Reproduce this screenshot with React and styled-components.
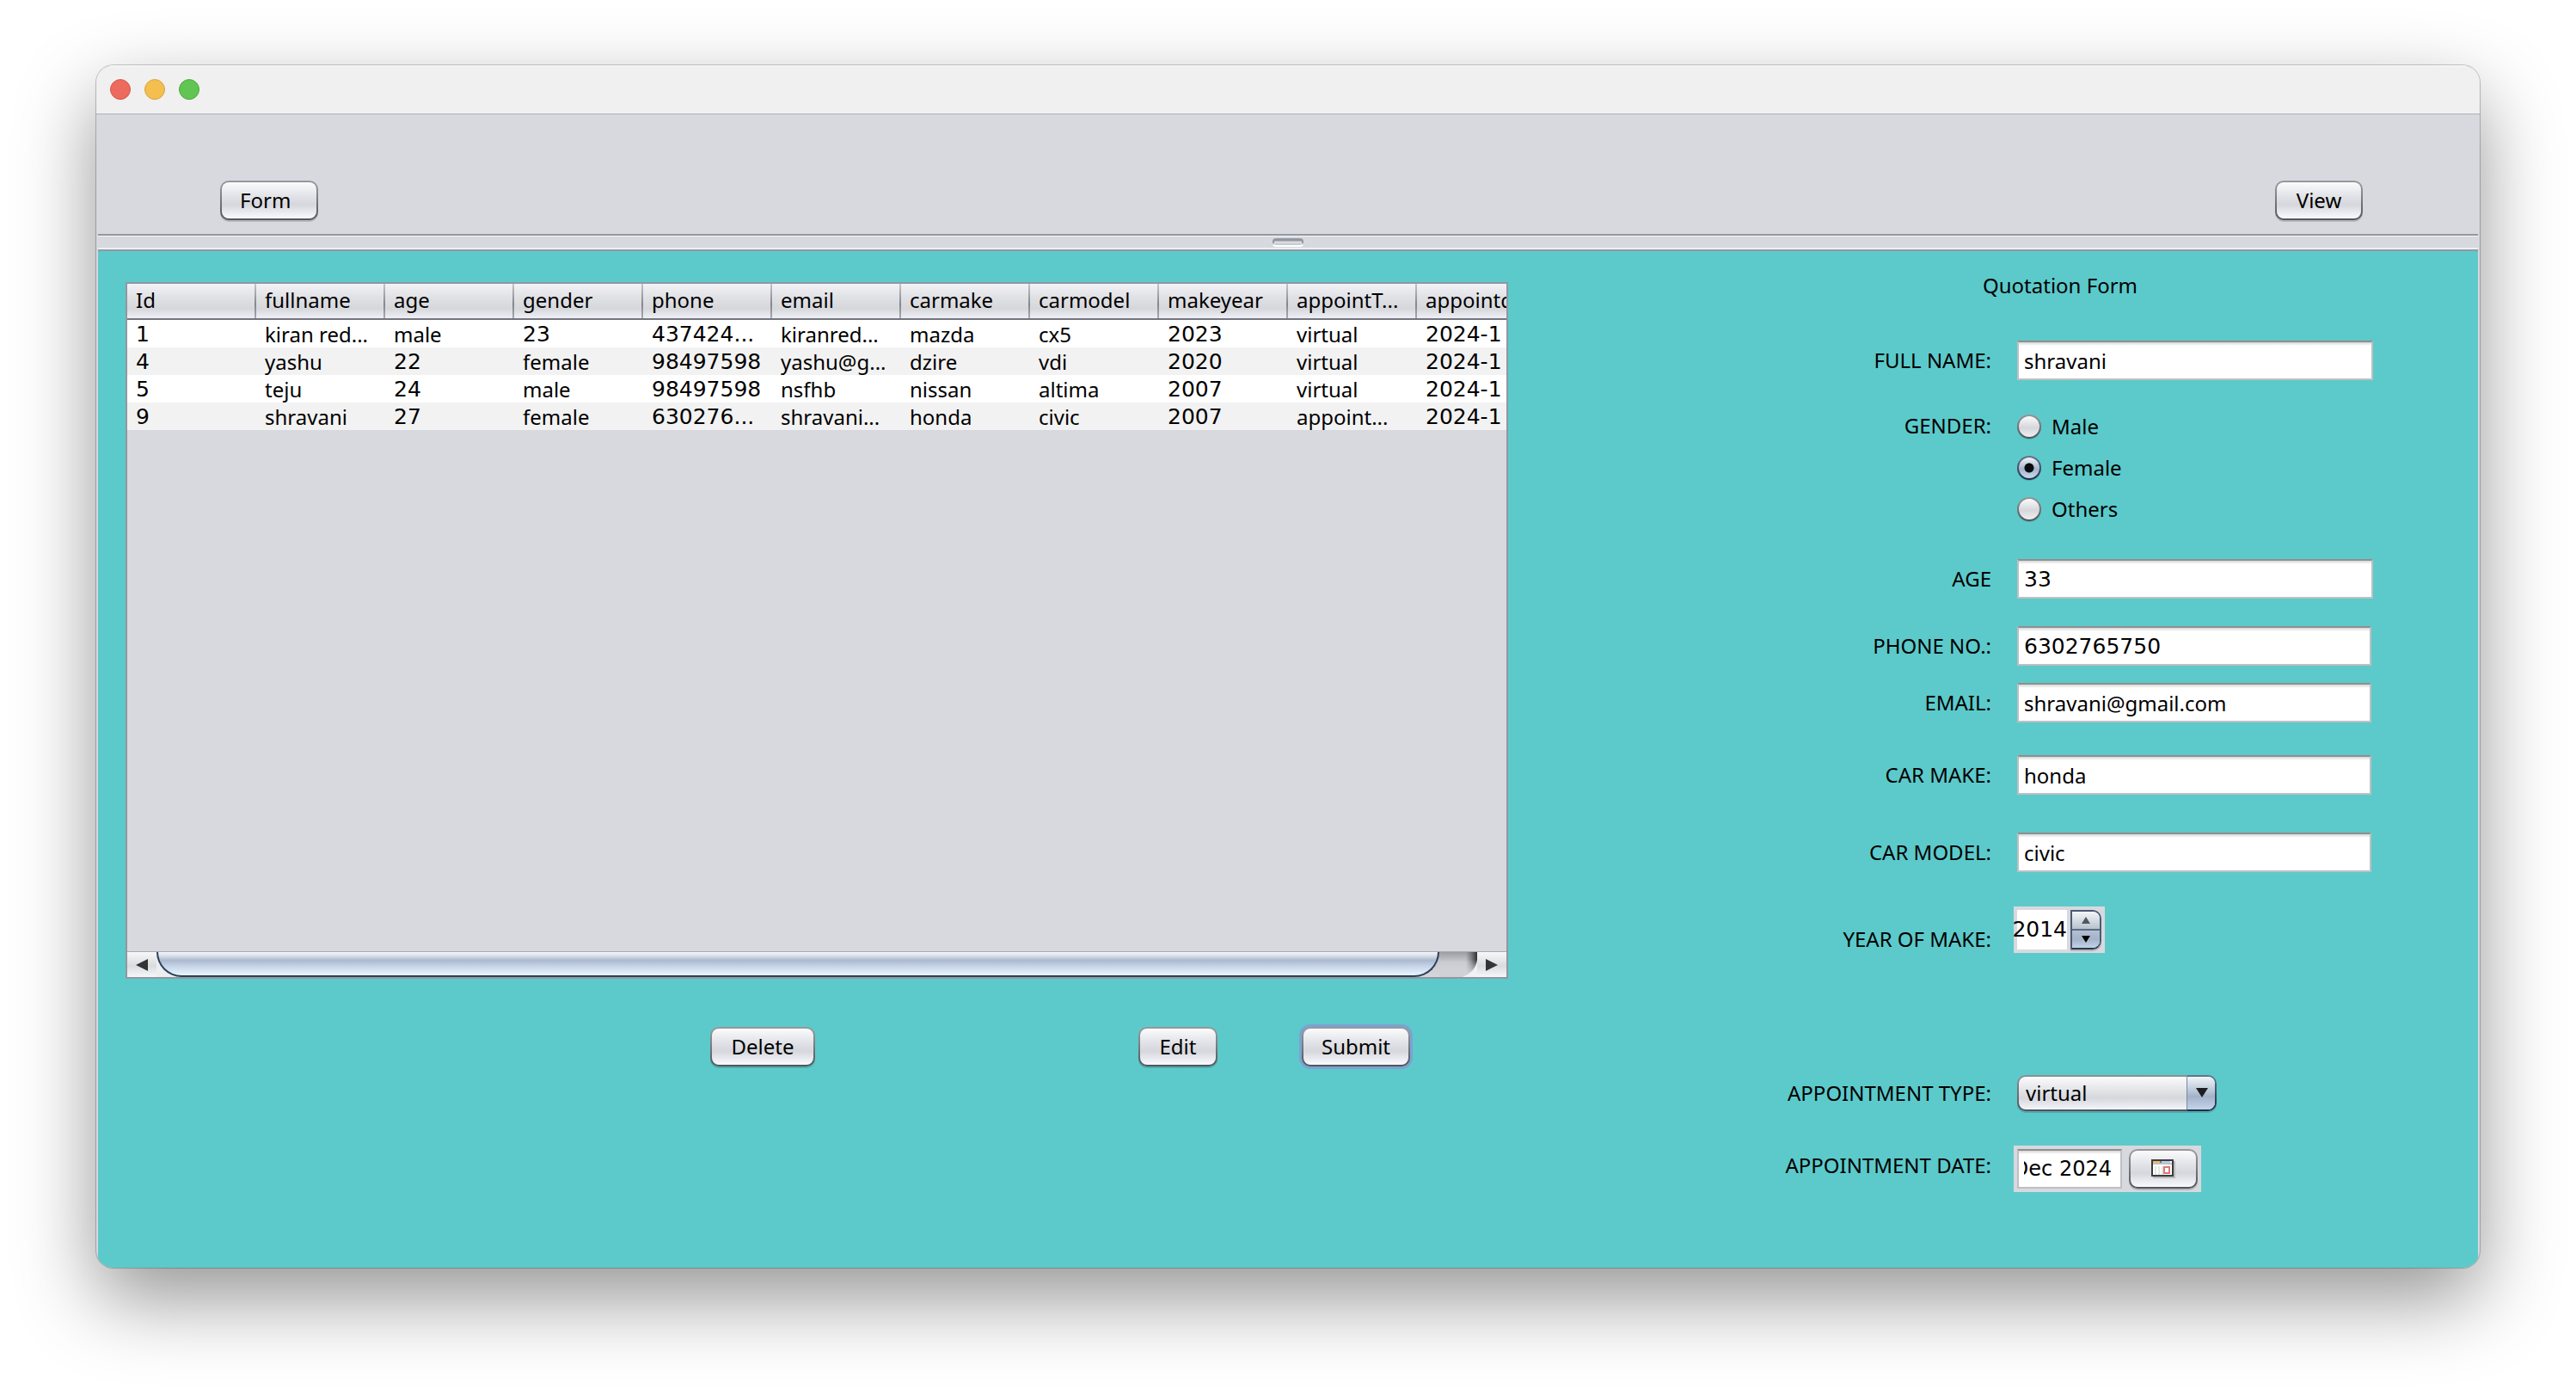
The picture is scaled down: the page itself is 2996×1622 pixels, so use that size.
import React from "react";
import styled, { createGlobalStyle, css } from "styled-components";

const color = {
  control: "#d8d9de",
  teal: "#5ccacb",
  line: "#9297a1",
  title: "#f0f0f0",
};

const textFont = '"Noto Sans", "Open Sans", sans-serif';
const digitFont = '"DejaVu Sans", "Noto Sans", sans-serif';

const GlobalStyle = createGlobalStyle`
  *, *::before, *::after { box-sizing: border-box; }
  body {
    margin: 0;
    background: #ffffff;
    color: #000000;
    font: 24px/32px ${textFont};
  }
  button, input, select { font: inherit; color: inherit; margin: 0; outline: none; }
`;

const digits = css`
  font-family: ${digitFont};
  font-size: 25px;
`;

/* Window frame */

const Desktop = styled.div`
  padding: 76px 112px 148px;
  overflow: hidden;
`;

const Window = styled.div`
  display: flex;
  flex-direction: column;
  overflow: hidden;
  border-radius: 20px;
  background: ${color.control};
  box-shadow: 0 0 0 1px rgba(0, 0, 0, 0.22), 0 36px 92px rgba(0, 0, 0, 0.42);
`;

const TitleBar = styled.header`
  display: flex;
  align-items: flex-start;
  gap: 16px;
  height: 57px;
  padding: 16px;
  background: ${color.title};
  border-bottom: 1px solid #b0b1b8;
  box-shadow: inset 0 1px 0 #ffffff;
`;

const Light = styled.button`
  width: 24px;
  height: 24px;
  padding: 0;
  border: 1px solid ${(p) => p.$edge};
  border-radius: 50%;
  background: ${(p) => p.$fill};
`;

const Toolbar = styled.nav`
  display: flex;
  justify-content: space-between;
  padding: 77px 136px 16px 144px;
`;

const Button = styled.button`
  height: 46px;
  min-width: ${(p) => p.$width}px;
  padding: 0 10px;
  border: 2px solid transparent;
  border-radius: 10px;
  background:
    linear-gradient(#fbfbfc 0%, #e2e3e8 38%, #d6d7dc 62%, #f9faff 100%) padding-box,
    linear-gradient(#96999e 0%, #86898e 30%, #515459 100%) border-box;
  box-shadow: ${(p) =>
    p.$focused ? "0 0 0 3px #7ba3d0" : "0 2px 0 rgba(40, 50, 60, 0.2)"};
  line-height: 40px;
  ${(p) => p.$leading && css`
    padding-left: 21px;
    text-align: left;
  `}
`;

const Divider = styled.div`
  display: flex;
  justify-content: center;
  align-items: center;
  height: 20px;
  margin: 0 2px;
  border-top: 2px solid ${color.line};
  border-bottom: 2px solid ${color.line};
  box-shadow: inset 0 1px 0 #f4f5f8, inset 0 -2px 0 #eeeff2;
`;

const Grip = styled.div`
  width: 36px;
  height: 10px;
  border: 2px solid transparent;
  border-radius: 4px;
  background:
    linear-gradient(${color.line} 0 1px, #dfe1e6 2px, #c4c6cc) padding-box,
    linear-gradient(${color.line} 0 50%, #ffffff 80%) border-box;
`;

const Workspace = styled.main`
  display: grid;
  grid-template-columns: minmax(0, 1608fr) minmax(0, 1006fr);
  margin: 0 2px;
  padding: 0 122px 0 32px;
  background: ${color.teal};
`;

/* Records */

const Records = styled.section`
  display: flex;
  flex-direction: column;
  gap: 56px;
  padding-top: 36px;
`;

const ScrollPane = styled.div`
  display: flex;
  flex-direction: column;
  height: 810px;
  border: 2px solid ${color.line};
  background: ${color.control};
`;

const Viewport = styled.div`
  flex: 1;
  overflow: hidden;
`;

const Table = styled.table`
  width: 1650px;
  table-layout: fixed;
  border-collapse: separate;
  border-spacing: 0;
`;

const HeadCell = styled.th`
  width: 150px;
  height: 42px;
  padding: 0 0 2px 10px;
  overflow: hidden;
  border-bottom: 2px solid #74747f;
  background:
    linear-gradient(#c4c5ca, #85868c 60%, #a9aab0) right / 2px 100% no-repeat,
    linear-gradient(#f3f3f7 0%, #e0e1e5 40%, #d6d7db 72%, #eef0f5 100%);
  font-weight: 400;
  text-align: left;
  white-space: nowrap;
`;

const Row = styled.tr`
  background: #ffffff;
  &:nth-child(even) { background: #f2f2f2; }
`;

const Cell = styled.td`
  height: 32px;
  padding: 2px 0 0 10px;
  overflow: hidden;
  line-height: 30px;
  white-space: nowrap;
  ${(p) => p.$digits && digits}
`;

const ScrollBar = styled.div`
  display: flex;
  height: 30px;
  border-top: 1px solid #a8abb2;
  background: linear-gradient(to right, #eceef0 0 60px, transparent 60px),
    linear-gradient(#9c9da3, #c9cad0 40%, #d6d7dc);
`;

const ScrollButton = styled.button`
  display: flex;
  align-items: center;
  justify-content: center;
  width: 34px;
  padding: 0;
  border: 0;
  background: linear-gradient(#f7f8f9, #d9dcde 55%, #f5f8fb);
`;

const Thumb = styled.div`
  flex: 1;
  border: 2px solid #2d405a;
  border-top: 0;
  border-radius: 0 0 30px 30px;
  background: linear-gradient(#f4f6f9 0%, #dde3ea 14%, #aab9cf 36%, #c3d1e6 58%, #e9f6fc 100%);
`;

const TrackEnd = styled.svg`
  display: block;
  width: 44px;
  height: 29px;
`;

const Actions = styled.div`
  display: flex;
  padding-right: 114px;
`;

const ActionSlot = styled.div`
  margin-left: ${(p) => p.$before};
`;

/* Form */

const Form = styled.form`
  display: flex;
  flex-direction: column;
  padding: 24px 0 88px;
`;

const FormTitle = styled.h1`
  align-self: flex-end;
  width: 728px;
  margin: 0 0 16px;
  font-size: 24px;
  font-weight: 400;
  text-align: center;
`;

const FormRow = styled.div`
  display: grid;
  grid-template-columns: minmax(0, 1fr) 418px;
  column-gap: 26px;
  align-items: ${(p) => p.$align || "center"};
  margin-top: ${(p) => p.$before}px;
`;

const Label = styled.label`
  line-height: ${(p) => (p.$tall ? 46 : 32)}px;
  text-align: right;
  white-space: nowrap;
`;

const FieldCell = styled.div`
  display: flex;
  flex-direction: column;
  align-items: flex-start;
  padding-left: 4px;
`;

const TextField = styled.input`
  width: ${(p) => p.$width}px;
  height: 46px;
  padding: 0 6px;
  border: 2px solid #bfc0c1;
  border-top-color: #8e8f90;
  border-radius: 0;
  background: linear-gradient(#d6d6d6, #ffffff 4px);
  ${(p) => p.$digits && digits}
  ${(p) => p.$tail && css`
    padding-right: 10px;
    direction: rtl;
    font-size: 24px;
  `}
`;

const RadioLabel = styled.label`
  display: flex;
  align-items: center;
  gap: 12px;
  height: 48px;
`;

const Radio = styled.input`
  appearance: none;
  width: 28px;
  height: 28px;
  border: 2px solid transparent;
  border-radius: 50%;
  background:
    linear-gradient(#fbfbfc, #d6d7dc 55%, #eeeff3) padding-box,
    linear-gradient(#97989c, #505156) border-box;
  box-shadow: 0 1px 0 rgba(40, 50, 60, 0.2);
  &:checked {
    background:
      radial-gradient(circle, #0b0c0e 0 5px, transparent 6px) padding-box,
      linear-gradient(#f1f4f8, #a5b4cb 55%, #c9d9ee) padding-box,
      linear-gradient(#66778f, #1e2c42) border-box;
  }
`;

const Spinner = styled.div`
  display: flex;
  align-items: stretch;
  width: 106px;
  height: 54px;
  padding: 4px 4px 4px 0;
  background: ${color.control};
`;

const SpinnerInput = styled.input`
  ${digits}
  width: 62px;
  padding: 0;
  border: 0;
  background: linear-gradient(to right, ${color.control} 4px, #ffffff 4px);
  direction: rtl;
`;

const SpinnerButtons = styled.div`
  display: flex;
  flex-direction: column;
  width: 36px;
  margin-left: 4px;
  overflow: hidden;
  border: 2px solid #4b5b74;
  border-bottom-color: #29374d;
  border-radius: 0 10px 10px 0;
  box-shadow: 0 2px 0 #b5b7bd;
`;

const SpinnerButton = styled.button`
  display: flex;
  flex: 1;
  align-items: center;
  justify-content: center;
  padding: 0;
  border: 0;
  background: ${(p) =>
    p.$down
      ? "linear-gradient(#b3c0d3, #a5b3c9 50%, #c3d2e8)"
      : "linear-gradient(#f4f6f8, #b6c2ce)"};
  & + & { border-top: 2px solid #5c6c84; }
`;

const SelectBox = styled.div`
  position: relative;
  width: 232px;
  height: 42px;
`;

const Select = styled.select`
  appearance: none;
  width: 100%;
  height: 42px;
  padding: 0 40px 0 8px;
  border: 2px solid transparent;
  border-radius: 10px;
  background:
    linear-gradient(#7589a5, #7589a5) right 32px top / 1px 100% no-repeat padding-box,
    linear-gradient(#f1f5f8, #b3c2d5 48%, #a3b2c8 60%, #c5d4ea) right / 32px 100% no-repeat padding-box,
    linear-gradient(#fbfbfc 0%, #e4e5e9 40%, #d6d7dc 65%, #f3f5fa 100%) padding-box,
    linear-gradient(#63748f, #1f2d46) right / 34px 100% no-repeat border-box,
    linear-gradient(#8c9096, #505359) border-box;
  box-shadow: 0 2px 0 rgba(40, 80, 90, 0.25);
  line-height: 36px;
`;

const SelectArrow = styled.svg`
  position: absolute;
  top: 15px;
  right: 10px;
  pointer-events: none;
`;

const DatePanel = styled.div`
  display: flex;
  gap: 8px;
  width: 218px;
  height: 54px;
  padding: 4px;
  background: ${color.control};
`;

const DateButton = styled(Button)`
  display: flex;
  align-items: center;
  justify-content: center;
`;

const columns = [
  "Id", "fullname", "age", "gender", "phone", "email",
  "carmake", "carmodel", "makeyear", "appointT...", "appointd",
];

const records = [
  ["1", "kiran red...", "male", "23", "437424...", "kiranred...", "mazda", "cx5", "2023", "virtual", "2024-1"],
  ["4", "yashu", "22", "female", "98497598", "yashu@g...", "dzire", "vdi", "2020", "virtual", "2024-1"],
  ["5", "teju", "24", "male", "98497598", "nsfhb", "nissan", "altima", "2007", "virtual", "2024-1"],
  ["9", "shravani", "27", "female", "630276...", "shravani...", "honda", "civic", "2007", "appoint...", "2024-1"],
];

const isDigits = (text) => /^[\d.-]+$/.test(text);

const Arrow = ({ width, height, points, fill = "#333436" }) => (
  <svg width={width} height={height} viewBox={`0 0 ${width} ${height}`} aria-hidden="true">
    <polygon points={points} fill={fill} />
  </svg>
);

const CalendarIcon = () => (
  <svg width="28" height="22" viewBox="0 0 28 22" aria-hidden="true">
    <rect x="2" y="2" width="26" height="20" fill="#b9babd" />
    <rect x="0" y="0" width="26" height="20" fill="#3c3c3e" />
    <rect x="2" y="2" width="22" height="16" fill="#ffffff" />
    <rect x="2" y="2" width="8" height="2" fill="#f2b857" />
    <rect x="10" y="2" width="2" height="2" fill="#77797d" />
    <rect x="12" y="2" width="10" height="2" fill="#b4cbf3" />
    <rect x="2" y="4" width="22" height="2" fill="#bfc0c2" />
    <path d="M5 8v10M9 8v10M13 8v10" stroke="#e3e8e3" strokeWidth="2" />
    <rect x="15" y="9" width="6" height="7" fill="#ffffff" stroke="#dc7777" strokeWidth="2" />
  </svg>
);

function TextRow({ id, label, value, before, width = 412 }) {
  return (
    <FormRow $before={before}>
      <Label htmlFor={id}>{label}</Label>
      <FieldCell>
        <TextField id={id} defaultValue={value} $width={width} $digits={isDigits(value)} />
      </FieldCell>
    </FormRow>
  );
}

function RecordsPanel() {
  return (
    <Records>
      <ScrollPane>
        <Viewport>
          <Table>
            <thead>
              <tr>
                {columns.map((name) => (
                  <HeadCell key={name} scope="col">{name}</HeadCell>
                ))}
              </tr>
            </thead>
            <tbody>
              {records.map((record) => (
                <Row key={record[0]}>
                  {record.map((text, i) => (
                    <Cell key={columns[i]} $digits={isDigits(text)}>{text}</Cell>
                  ))}
                </Row>
              ))}
            </tbody>
          </Table>
        </Viewport>
        <ScrollBar>
          <ScrollButton type="button" aria-label="Scroll left">
            <Arrow width={14} height={14} points="0,7 14,0 14,14" />
          </ScrollButton>
          <Thumb />
          <TrackEnd viewBox="0 0 46 29" preserveAspectRatio="none" aria-hidden="true">
            <defs>
              <linearGradient id="trackShade" x1="0" x2="1" y1="0" y2="0">
                <stop offset="0.7" stopColor="#55565a" stopOpacity="0" />
                <stop offset="1" stopColor="#2c2d30" />
              </linearGradient>
              <linearGradient id="trackFade" x1="0" x2="0" y1="0" y2="1">
                <stop offset="0.3" stopColor="#d0d1d6" stopOpacity="0" />
                <stop offset="0.9" stopColor="#d0d1d6" />
              </linearGradient>
            </defs>
            <rect width="46" height="29" fill="url(#trackShade)" />
            <rect width="46" height="29" fill="url(#trackFade)" />
            <path d="M46 9C45 18 39 25 28 29H46Z" fill="#eff1f3" />
          </TrackEnd>
          <ScrollButton type="button" aria-label="Scroll right">
            <Arrow width={14} height={14} points="0,0 14,7 0,14" />
          </ScrollButton>
        </ScrollBar>
      </ScrollPane>
      <Actions>
        <ActionSlot $before="auto"><Button type="button" $width={122}>Delete</Button></ActionSlot>
        <ActionSlot $before="376px"><Button type="button" $width={92}>Edit</Button></ActionSlot>
        <ActionSlot $before="98px"><Button type="button" $width={126} $focused>Submit</Button></ActionSlot>
      </Actions>
    </Records>
  );
}

function QuotationForm() {
  return (
    <Form onSubmit={(e) => e.preventDefault()}>
      <FormTitle>Quotation Form</FormTitle>
      <TextRow id="name" label="FULL NAME:" value="shravani" before={32} width={414} />
      <FormRow $before={30} $align="start" role="radiogroup" aria-labelledby="gender">
        <Label as="span" id="gender" $tall>GENDER:</Label>
        <FieldCell>
          {["Male", "Female", "Others"].map((g) => (
            <RadioLabel key={g}>
              <Radio type="radio" name="gender" value={g} defaultChecked={g === "Female"} />
              {g}
            </RadioLabel>
          ))}
        </FieldCell>
      </FormRow>
      <TextRow id="age" label="AGE" value="33" before={34} width={414} />
      <TextRow id="phone" label="PHONE NO.:" value="6302765750" before={32} />
      <TextRow id="email" label="EMAIL:" value="shravani@gmail.com" before={20} />
      <TextRow id="make" label="CAR MAKE:" value="honda" before={38} />
      <TextRow id="model" label="CAR MODEL:" value="civic" before={44} />
      <FormRow $before={40} $align="end">
        <Label htmlFor="year">YEAR OF MAKE:</Label>
        <Spinner>
          <SpinnerInput id="year" defaultValue="2014" />
          <SpinnerButtons>
            <SpinnerButton type="button" aria-label="Next year">
              <Arrow width={10} height={8} points="5,0 10,8 0,8" fill="#55575a" />
            </SpinnerButton>
            <SpinnerButton type="button" aria-label="Previous year" $down>
              <Arrow width={10} height={8} points="0,0 10,0 5,8" fill="#000000" />
            </SpinnerButton>
          </SpinnerButtons>
        </Spinner>
      </FormRow>
      <FormRow $before={142}>
        <Label htmlFor="type">APPOINTMENT TYPE:</Label>
        <FieldCell>
          <SelectBox>
            <Select id="type" defaultValue="virtual">
              <option>virtual</option>
            </Select>
            <SelectArrow width="14" height="11" viewBox="0 0 14 11" aria-hidden="true">
              <polygon points="0,0 14,0 7,11" fill="#1d1e20" />
            </SelectArrow>
          </SelectBox>
        </FieldCell>
      </FormRow>
      <FormRow $before={40} $align="start">
        <Label htmlFor="date" $tall>APPOINTMENT DATE:</Label>
        <DatePanel>
          <TextField id="date" defaultValue="Dec 2024" $width={122} $digits $tail />
          <DateButton type="button" $width={80} aria-label="Choose date">
            <CalendarIcon />
          </DateButton>
        </DatePanel>
      </FormRow>
    </Form>
  );
}

export default function App() {
  return (
    <>
      <GlobalStyle />
      <Desktop>
        <Window>
          <TitleBar>
            <Light aria-label="Close" $fill="#ec6a5e" $edge="#d5564b" />
            <Light aria-label="Minimize" $fill="#f4bf4f" $edge="#d8a23a" />
            <Light aria-label="Zoom" $fill="#61c554" $edge="#4fa73f" />
          </TitleBar>
          <Toolbar>
            <Button type="button" $width={114} $leading>Form</Button>
            <Button type="button" $width={102}>View</Button>
          </Toolbar>
          <Divider>
            <Grip />
          </Divider>
          <Workspace>
            <RecordsPanel />
            <QuotationForm />
          </Workspace>
        </Window>
      </Desktop>
    </>
  );
}
